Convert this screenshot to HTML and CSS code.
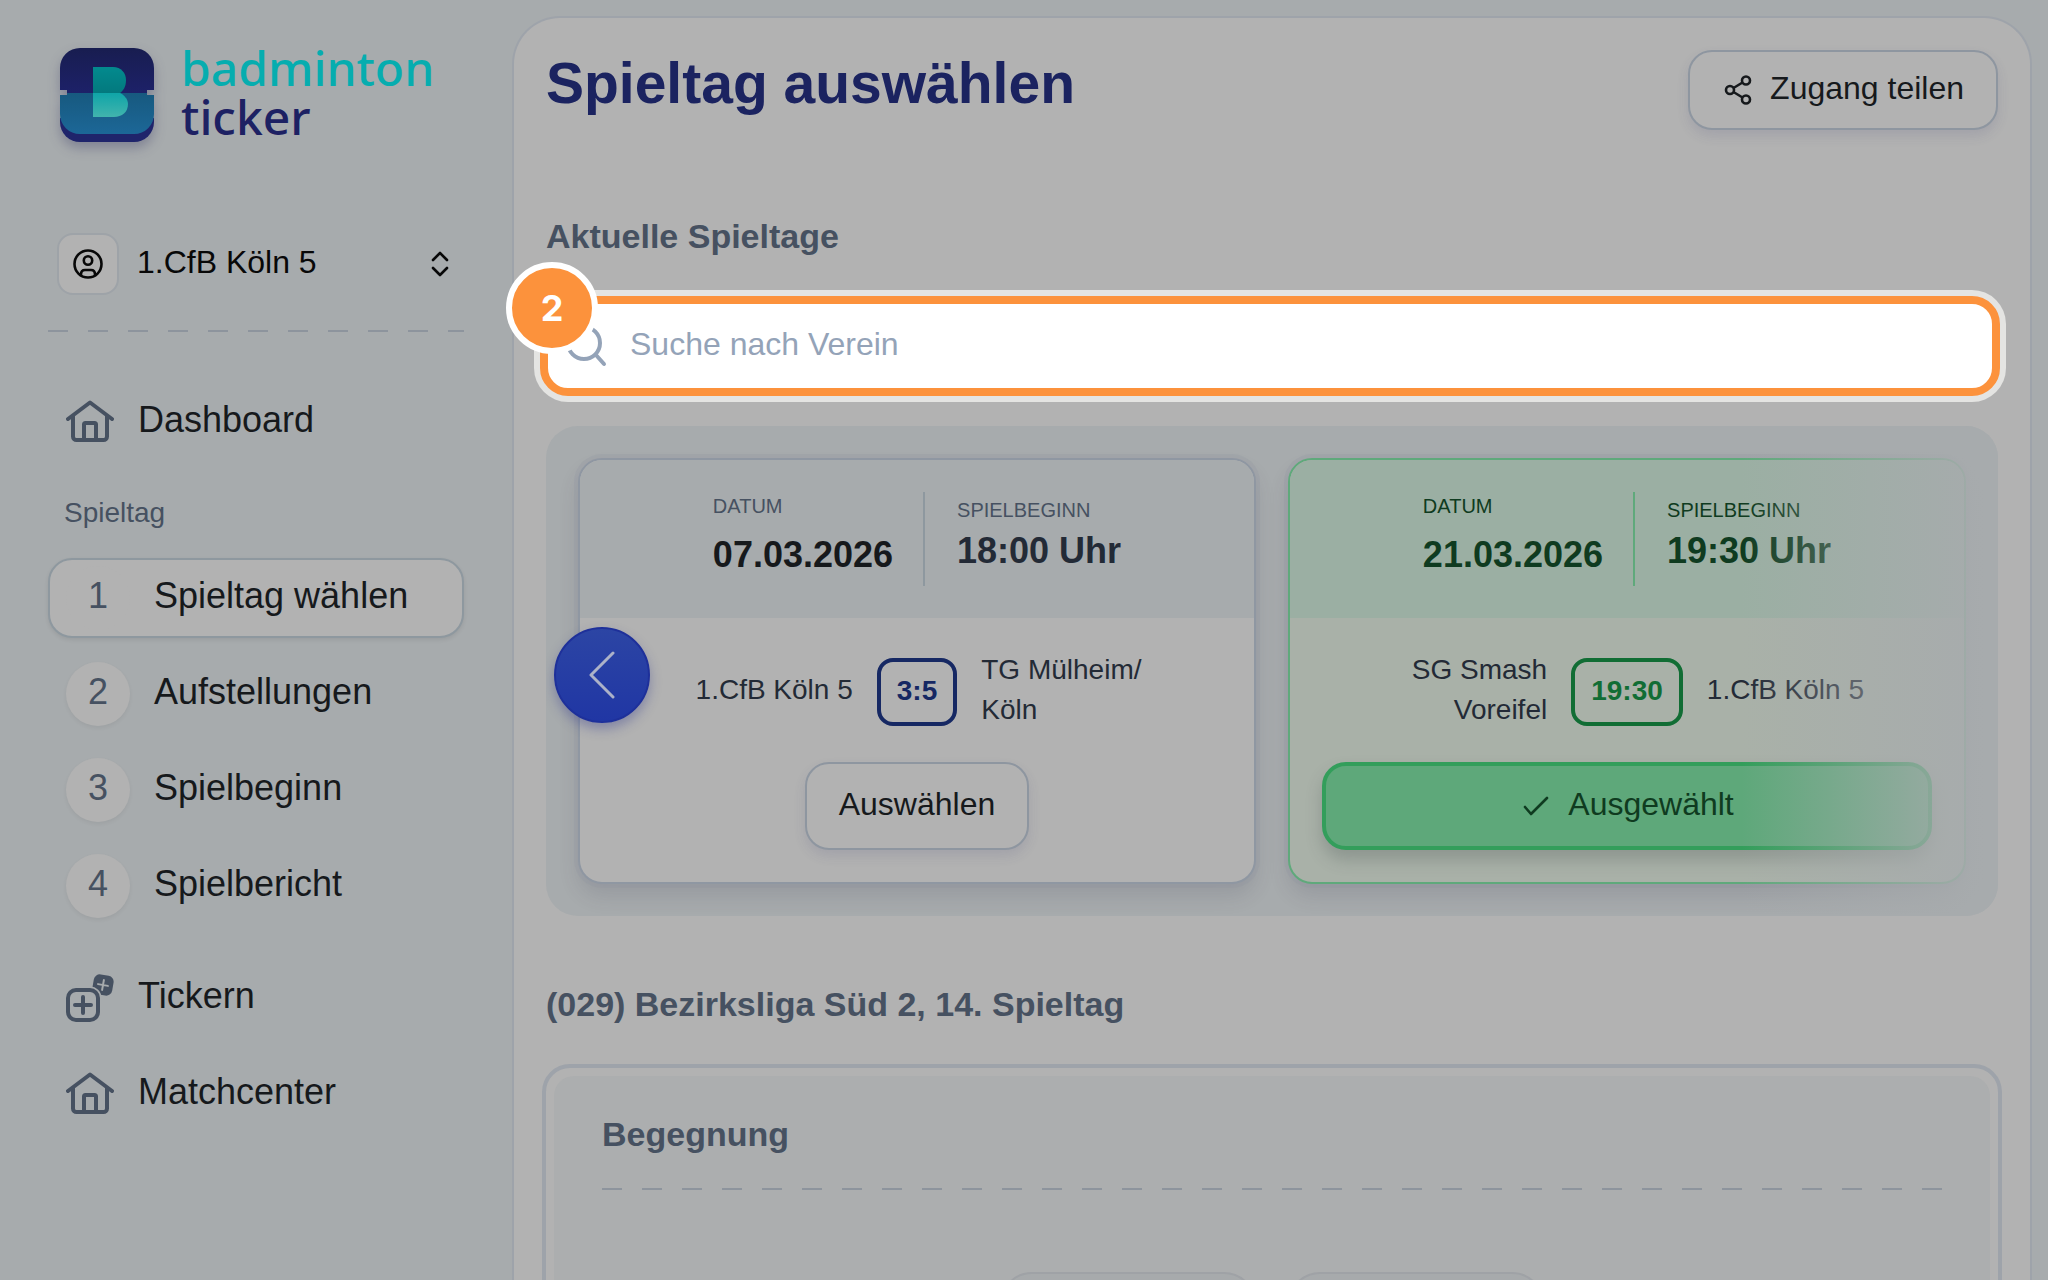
FILE: index.html
```html
<!DOCTYPE html>
<html lang="de">
<head>
    <meta charset="UTF-8">
    <meta name="viewport" content="width=device-width, initial-scale=1.0">
    <title>badminton ticker - Spieltag auswählen</title>
    <link rel="stylesheet" href="styles.css">
</head>
<body>
    <svg width="0" height="0" class="icon-defs" aria-hidden="true">
        <symbol id="icon-home" viewBox="0 0 48 48">
            <path d="M2 21 24 4.500 46 21M7 18.500V38.500a3.500 3.500 0 0 0 3.500 3.500h27a3.500 3.500 0 0 0 3.500-3.500V18.500M18 42V26.500a1.500 1.500 0 0 1 1.500-1.500h9a1.500 1.500 0 0 1 1.500 1.500V42" fill="none" stroke="currentColor" stroke-width="4" stroke-linecap="round" stroke-linejoin="round"/>
        </symbol>
    </svg>

    <div class="app">
        <aside class="sidebar">
            <div class="brand">
                <svg class="brand-logo" viewBox="0 0 94 94" aria-hidden="true">
                    <defs>
                        <linearGradient id="top" x1="0" y1="0" x2="0" y2="1">
                            <stop offset="0" stop-color="#181d50"/>
                            <stop offset="1" stop-color="#1d2169"/>
                        </linearGradient>
                        <linearGradient id="bottom" x1="0" y1="0" x2="0" y2="1">
                            <stop offset="0" stop-color="#17597f"/>
                            <stop offset="1" stop-color="#1c6797"/>
                        </linearGradient>
                        <linearGradient id="letterTop" x1="0" y1="0" x2="0" y2="1">
                            <stop offset="0" stop-color="#038a8e"/>
                            <stop offset="1" stop-color="#03797e"/>
                        </linearGradient>
                        <linearGradient id="letterBottom" x1="0" y1="0" x2="0" y2="1">
                            <stop offset="0" stop-color="#0fa5a8"/>
                            <stop offset="1" stop-color="#42b4ad"/>
                        </linearGradient>
                    </defs>
                    <path d="M0 70h94v4a20 20 0 0 1-20 20H20a20 20 0 0 1-20-20z" fill="#1f246b"/>
                    <path d="M0 42V20A20 20 0 0 1 20 0h54a20 20 0 0 1 20 20v22h-7v4H7v-4z" fill="url(#top)"/>
                    <path d="M7 45h80v2h7v19a20 20 0 0 1-20 20H20A20 20 0 0 1 0 66V47h7z" fill="url(#bottom)"/>
                    <path d="M33 19h20c8 0 13 6 13 13s-3 11-6 13H33z" fill="url(#letterTop)"/>
                    <path d="M33 45h27c4 2 8 6 8 11 0 8-6 13-14 13H33z" fill="url(#letterBottom)"/>
                </svg>
                <div class="brand-name">
                    <span class="brand-first">badminton</span>
                    <span class="brand-second">ticker</span>
                </div>
            </div>

            <button type="button" class="account">
                <span class="account-tile">
                    <svg viewBox="0 0 32 32" width="32" height="32" fill="none" stroke="currentColor" stroke-width="2.600" stroke-linecap="round" aria-hidden="true">
                        <circle cx="16" cy="16" r="13.500"/>
                        <circle cx="16" cy="12.500" r="4.200"/>
                        <path d="M9 26.500c0-3 1-4.500 4-4.500h6c3 0 4 1.500 4 4.500"/>
                    </svg>
                </span>
                <span class="account-name">1.CfB Köln 5</span>
                <svg viewBox="0 0 20 28" width="20" height="28" fill="none" stroke="currentColor" stroke-width="2.600" stroke-linecap="round" stroke-linejoin="round" aria-hidden="true">
                    <path d="M3 10l7-7 7 7M3 18l7 7 7-7"/>
                </svg>
            </button>

            <hr class="dashed">

            <nav class="menu">
                <a href="#" class="menu-item">
                    <svg class="menu-icon" aria-hidden="true"><use href="#icon-home"/></svg>
                    <span class="menu-text">Dashboard</span>
                </a>
                <p class="menu-label">Spieltag</p>
                <ol class="steps">
                    <li>
                        <a href="#" class="menu-item active">
                            <span class="step-number">1</span>
                            <span class="menu-text">Spieltag wählen</span>
                        </a>
                    </li>
                    <li>
                        <a href="#" class="menu-item">
                            <span class="step-number">2</span>
                            <span class="menu-text">Aufstellungen</span>
                        </a>
                    </li>
                    <li>
                        <a href="#" class="menu-item">
                            <span class="step-number">3</span>
                            <span class="menu-text">Spielbeginn</span>
                        </a>
                    </li>
                    <li>
                        <a href="#" class="menu-item">
                            <span class="step-number">4</span>
                            <span class="menu-text">Spielbericht</span>
                        </a>
                    </li>
                </ol>
                <a href="#" class="menu-item">
                    <svg class="menu-icon" viewBox="0 0 48 48" fill="none" stroke-linecap="round" aria-hidden="true">
                        <g transform="rotate(10 37 11)">
                            <rect x="27" y="1" width="20" height="20" rx="6" fill="currentColor"/>
                            <path d="M37 6v10M32 11h10" stroke="#a7abad" stroke-width="2"/>
                        </g>
                        <rect x="2" y="16" width="30" height="30" rx="8" fill="#a7abad" stroke="#a7abad" stroke-width="7"/>
                        <rect x="2" y="16" width="30" height="30" rx="8" stroke="currentColor" stroke-width="4"/>
                        <path d="M17 23v16M9 31h16" stroke="currentColor" stroke-width="4"/>
                    </svg>
                    <span class="menu-text">Tickern</span>
                </a>
                <a href="#" class="menu-item">
                    <svg class="menu-icon" aria-hidden="true"><use href="#icon-home"/></svg>
                    <span class="menu-text">Matchcenter</span>
                </a>
            </nav>
        </aside>

        <main class="content">
            <header class="content-header">
                <h1>Spieltag auswählen</h1>
                <button type="button" class="button">
                    <svg viewBox="0 0 32 32" width="32" height="32" fill="none" stroke="currentColor" stroke-width="2.600" aria-hidden="true">
                        <circle cx="8" cy="16" r="4"/>
                        <circle cx="24" cy="6.500" r="4"/>
                        <circle cx="24" cy="25.500" r="4"/>
                        <path d="M11.500 14 20.500 8.500M11.500 18l9 5.500"/>
                    </svg>
                    <span>Zugang teilen</span>
                </button>
            </header>

            <h2>Aktuelle Spieltage</h2>

            <div class="search">
                <span class="tour-step">2</span>
                <label for="search">
                    <svg viewBox="0 0 44 44" width="44" height="44" fill="none" stroke="#94a3b8" stroke-width="4" stroke-linecap="round" aria-hidden="true">
                        <circle cx="18" cy="19" r="16"/>
                        <path d="M30 31l8 9"/>
                    </svg>
                </label>
                <input type="text" id="search" placeholder="Suche nach Verein" aria-label="Suche nach Verein">
            </div>

            <section class="slider">
                <article class="card">
                    <div class="card-head">
                        <div class="fact fact-date">
                            <span class="fact-label">DATUM</span>
                            <strong>07.03.2026</strong>
                        </div>
                        <div class="fact fact-time">
                            <span class="fact-label">SPIELBEGINN</span>
                            <strong>18:00 Uhr</strong>
                        </div>
                    </div>
                    <div class="card-body">
                        <div class="match">
                            <span class="team home">1.CfB Köln 5</span>
                            <span class="score">3:5</span>
                            <span class="team">TG Mülheim/<br>Köln</span>
                        </div>
                        <button type="button" class="button button-select">Auswählen</button>
                    </div>
                </article>

                <article class="card selected">
                    <div class="card-head">
                        <div class="fact fact-date">
                            <span class="fact-label">DATUM</span>
                            <strong>21.03.2026</strong>
                        </div>
                        <div class="fact fact-time">
                            <span class="fact-label">SPIELBEGINN</span>
                            <strong>19:30 Uhr</strong>
                        </div>
                    </div>
                    <div class="card-body">
                        <div class="match">
                            <span class="team home">SG Smash<br>Voreifel</span>
                            <span class="score">19:30</span>
                            <span class="team">1.CfB Köln 5</span>
                        </div>
                        <button type="button" class="button button-select">
                            <svg viewBox="0 0 32 32" width="32" height="32" fill="none" stroke="currentColor" stroke-width="2.600" stroke-linecap="round" stroke-linejoin="round" aria-hidden="true">
                                <path d="M5 17l6 7L27 8"/>
                            </svg>
                            <span>Ausgewählt</span>
                        </button>
                    </div>
                </article>

                <button type="button" class="slider-prev" aria-label="Zurück">
                    <svg viewBox="0 0 48 48" width="48" height="48" fill="none" stroke="currentColor" stroke-width="3" stroke-linecap="round" stroke-linejoin="round" aria-hidden="true">
                        <path d="M35 2 13 24l22 22"/>
                    </svg>
                </button>
            </section>

            <h2>(029) Bezirksliga Süd 2, 14. Spieltag</h2>

            <section class="panel">
                <div class="panel-inner">
                    <h3>Begegnung</h3>
                    <hr class="dashed">
                    <div class="pairing">
                        <div class="pairing-team"></div>
                        <div class="pairing-team"></div>
                    </div>
                </div>
            </section>
        </main>
    </div>
</body>
</html>
```
FILE: styles.css
```css
* {
    box-sizing: border-box;
}

body {
    margin: 0;
    height: 100vh;
    overflow: hidden;
    background-color: #a7abad;
    color: #16191c;
    font-family: "Liberation Sans", Arial, sans-serif;
    font-size: 32px;
}

h1, h2, h3, p, ol {
    margin: 0;
    padding: 0;
}

a {
    color: inherit;
    text-decoration: none;
}

button {
    font: inherit;
    color: inherit;
    cursor: pointer;
}

.icon-defs {
    position: absolute;
}

.app {
    display: grid;
    grid-template-columns: 512px 1fr;
    min-height: 100vh;
}

.dashed {
    width: 100%;
    height: 2px;
    margin: 0;
    border: none;
    background: repeating-linear-gradient(to right, #8d949d 0 20px, transparent 20px 40px);
}

/* Sidebar */

.sidebar {
    padding: 48px 48px 0;
}

.brand {
    display: flex;
    align-items: flex-start;
    gap: 27px;
    height: 185px;
    padding-left: 12px;
}

.brand-logo {
    width: 94px;
    height: 94px;
    filter: drop-shadow(0 6px 6px rgba(40, 40, 90, 0.3));
}

.brand-name {
    margin-top: -5px;
    font-family: "Noto Sans", sans-serif;
    font-size: 48px;
    font-weight: 500;
    line-height: 49px;
}

.brand-name span {
    display: block;
}

.brand-first {
    color: #06adaf;
}

.brand-second {
    color: #1d2163;
}

.account {
    display: flex;
    align-items: center;
    width: 100%;
    margin-bottom: 35px;
    padding: 0 14px 0 9px;
    border: none;
    background: none;
    color: #080808;
}

.account-tile {
    display: flex;
    align-items: center;
    justify-content: center;
    width: 62px;
    height: 62px;
    border: 2px solid #9ea3a8;
    border-radius: 16px;
    background-color: #b2b2b2;
}

.account-name {
    flex: 1;
    padding: 0 0 4px 18px;
    text-align: left;
}

.menu {
    padding-top: 50px;
    font-size: 36px;
}

.menu-item {
    display: flex;
    align-items: center;
    gap: 24px;
    height: 80px;
    margin-bottom: 16px;
    padding: 0 16px;
    border: 2px solid transparent;
    border-radius: 24px;
}

.menu-item.active {
    border-color: #8e989f;
    background-color: #b2b2b2;
    box-shadow: 0 2px 4px rgba(0, 0, 0, 0.08);
}

.menu-icon {
    width: 48px;
    height: 48px;
    color: #465161;
}

.menu-text {
    padding-bottom: 4px;
}

.menu-label {
    height: 80px;
    padding: 15px 16px 0;
    color: #465161;
    font-size: 28px;
    line-height: 40px;
}

.steps {
    margin-bottom: 32px;
    list-style: none;
}

.step-number {
    width: 64px;
    height: 64px;
    border-radius: 50%;
    background-color: #b2b2b2;
    color: #465161;
    line-height: 60px;
    text-align: center;
}

.menu-item:not(.active) .step-number {
    box-shadow: 0 2px 4px rgba(0, 0, 0, 0.06);
}

/* Content */

.content {
    margin: 16px 16px 0 0;
    padding: 32px;
    border: 2px solid #9ea3aa;
    border-bottom: none;
    border-radius: 48px 48px 0 0;
    background-color: #b2b2b2;
}

.content-header {
    display: flex;
    align-items: flex-start;
    justify-content: space-between;
    margin-bottom: 84px;
}

h1 {
    color: #1b2360;
    font-size: 57px;
    line-height: 66px;
}

h2, h3 {
    color: #465161;
    font-size: 34px;
    line-height: 44px;
}

h2 {
    margin-bottom: 38px;
}

.button {
    display: flex;
    align-items: center;
    justify-content: center;
    gap: 16px;
    height: 80px;
    padding: 0 32px 4px;
    border: 2px solid #8e96a0;
    border-radius: 24px;
    background-color: #b2b2b2;
    box-shadow: 0 6px 12px rgba(70, 70, 120, 0.14);
}

.button svg {
    position: relative;
    top: 2px;
}

.search {
    position: relative;
    display: flex;
    align-items: center;
    height: 100px;
    margin: 0 -2px 30px -6px;
    padding-left: 18px;
    border: 8px solid #fc923c;
    border-radius: 28px;
    background-color: #ffffff;
    box-shadow: 0 0 0 6px #e4e4e2;
}

.search label {
    display: flex;
}

.search input {
    flex: 1;
    height: 100%;
    padding: 0 20px 4px;
    border: none;
    outline: none;
    background: none;
    font: inherit;
}

.search input::placeholder {
    color: #94a3b8;
    opacity: 1;
}

.tour-step {
    position: absolute;
    top: -42px;
    left: -42px;
    width: 92px;
    height: 92px;
    border: 6px solid #ffffff;
    border-radius: 50%;
    background-color: #fc923c;
    color: #ffffff;
    font-family: Inter, sans-serif;
    font-size: 36px;
    font-weight: 700;
    line-height: 80px;
    text-align: center;
}

/* Slider */

.slider {
    position: relative;
    display: grid;
    grid-template-columns: 1fr 1fr;
    gap: 32px;
    margin-bottom: 66px;
    padding: 32px;
    border-radius: 32px;
    background-color: #a7abad;
    overflow: hidden;
}

/* fade out towards the next slide */
.slider::after {
    content: "";
    position: absolute;
    top: 0;
    right: 0;
    bottom: 0;
    width: 256px;
    background: linear-gradient(to right, rgba(167, 171, 173, 0), #a7abad);
    pointer-events: none;
}

.card {
    border: 2px solid #8f97a2;
    border-radius: 24px;
    background-color: #b2b2b2;
    box-shadow: 0 0 0 4px rgba(140, 145, 160, 0.2), 0 12px 20px rgba(60, 60, 80, 0.14);
}

.card-head {
    display: flex;
    justify-content: center;
    padding: 32px;
    border-radius: 22px 22px 0 0;
    background-color: #a7abad;
}

.fact {
    display: flex;
    flex-direction: column;
    justify-content: center;
    height: 94px;
}

.fact-date {
    gap: 8px;
    padding-right: 30px;
    color: #16191c;
}

.fact-time {
    padding-left: 32px;
    border-left: 2px solid #8e989f;
    color: #232a36;
}

.fact-label {
    color: #465161;
    font-size: 20px;
    line-height: 24px;
}

.fact strong {
    font-size: 36px;
    line-height: 58px;
}

.card-body {
    padding: 32px;
}

.match {
    display: grid;
    grid-template-columns: 1fr auto 1fr;
    align-items: center;
    gap: 24px;
    height: 80px;
    margin-bottom: 32px;
    color: #232a36;
    font-size: 28px;
    line-height: 40px;
}

.team {
    padding-bottom: 4px;
}

.team.home {
    text-align: right;
}

.score {
    height: 68px;
    padding: 0 16px;
    border: 4px solid #162863;
    border-radius: 16px;
    color: #162863;
    font-weight: bold;
    line-height: 58px;
}

.button-select {
    height: 88px;
    margin: 0 auto;
}

.card.selected {
    border-color: #5fa97b;
    background-color: #a9b1a8;
}

.selected .card-head {
    background-color: #9bafa3;
}

.selected .fact,
.selected .fact-label {
    border-color: #5fa97b;
    color: #0f3b20;
}

.selected .score {
    border-color: #116d34;
    color: #116d34;
}

.selected .button-select {
    width: 100%;
    border: 4px solid #339e5b;
    background-color: #5ea87a;
    color: #0f3b20;
    box-shadow: 0 10px 16px rgba(60, 70, 70, 0.25);
}

.slider-prev {
    position: absolute;
    top: calc(50% - 44px);
    left: 8px;
    display: flex;
    align-items: center;
    justify-content: center;
    width: 96px;
    height: 96px;
    padding: 0;
    border: 2px solid #1e309a;
    border-radius: 50%;
    background: linear-gradient(#2c45a4, #2036a4);
    box-shadow: 0 6px 12px rgba(40, 50, 140, 0.35);
    color: #acb2c8;
}

/* Panel */

.panel {
    margin: 0 -4px;
    padding: 8px;
    border: 4px solid #9ea3aa;
    border-radius: 28px;
}

.panel-inner {
    padding: 36px 48px 48px;
    border-radius: 20px;
    background-color: #acaeaf;
}

.panel h3 {
    margin-bottom: 32px;
}

.pairing {
    display: flex;
    justify-content: center;
    gap: 32px;
    margin-top: 82px;
}

.pairing-team {
    width: 256px;
    height: 256px;
    border: 2px solid #9fa2a6;
    border-radius: 32px;
    background-color: #a7aaac;
}
```
